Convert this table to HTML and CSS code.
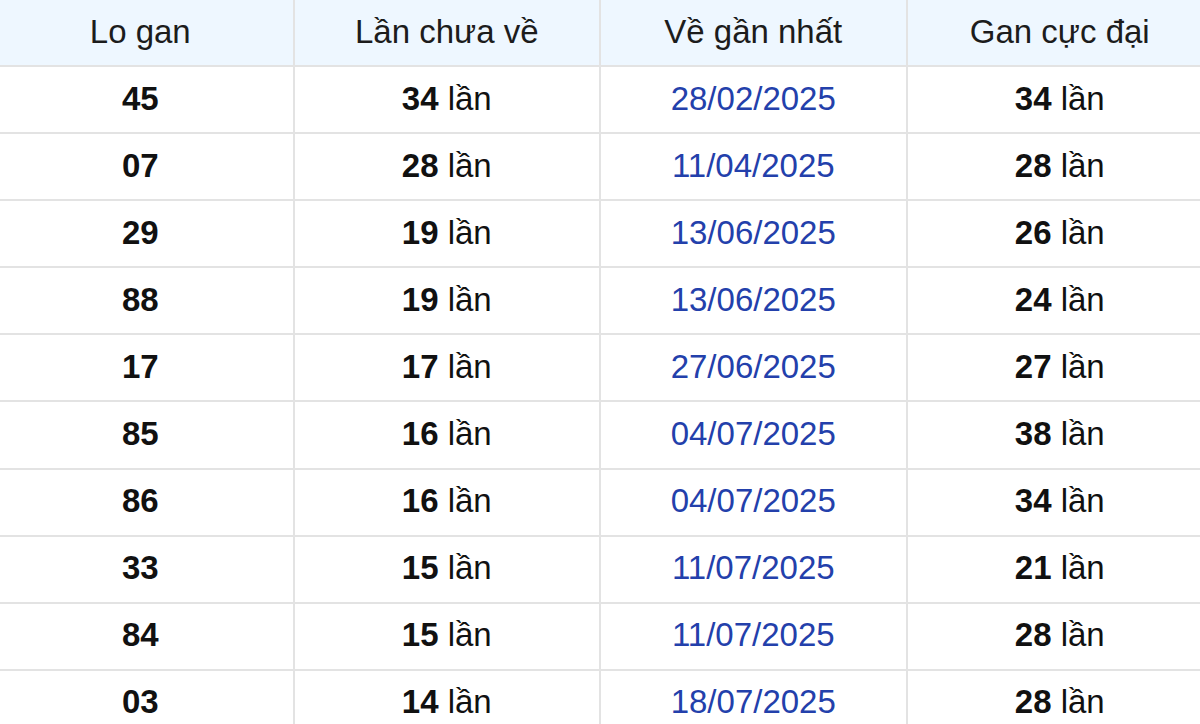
FILE: index.html
```html
<!DOCTYPE html>
<html lang="vi">
<head>
<meta charset="utf-8">
<title>Lo gan</title>
<link rel="stylesheet" href="styles.css">
</head>
<body>
<table class="gan">
  <thead>
    <tr><th>Lo gan</th><th>Lần chưa về</th><th>Về gần nhất</th><th>Gan cực đại</th></tr>
  </thead>
  <tbody>
    <tr><td><b>45</b></td><td><b>34</b> lần</td><td class="date">28/02/2025</td><td><b>34</b> lần</td></tr>
    <tr><td><b>07</b></td><td><b>28</b> lần</td><td class="date">11/04/2025</td><td><b>28</b> lần</td></tr>
    <tr><td><b>29</b></td><td><b>19</b> lần</td><td class="date">13/06/2025</td><td><b>26</b> lần</td></tr>
    <tr><td><b>88</b></td><td><b>19</b> lần</td><td class="date">13/06/2025</td><td><b>24</b> lần</td></tr>
    <tr><td><b>17</b></td><td><b>17</b> lần</td><td class="date">27/06/2025</td><td><b>27</b> lần</td></tr>
    <tr><td><b>85</b></td><td><b>16</b> lần</td><td class="date">04/07/2025</td><td><b>38</b> lần</td></tr>
    <tr><td><b>86</b></td><td><b>16</b> lần</td><td class="date">04/07/2025</td><td><b>34</b> lần</td></tr>
    <tr><td><b>33</b></td><td><b>15</b> lần</td><td class="date">11/07/2025</td><td><b>21</b> lần</td></tr>
    <tr><td><b>84</b></td><td><b>15</b> lần</td><td class="date">11/07/2025</td><td><b>28</b> lần</td></tr>
    <tr><td><b>03</b></td><td><b>14</b> lần</td><td class="date">18/07/2025</td><td><b>28</b> lần</td></tr>
  </tbody>
</table>
</body>
</html>
```
FILE: styles.css
```css
html, body {
  margin: 0;
  padding: 0;
  background: #ffffff;
  overflow: hidden;
}
body {
  font-family: "Liberation Sans", Arial, sans-serif;
  color: #111;
}
.gan {
  border-collapse: collapse;
  table-layout: fixed;
  width: 1228px;
  margin-left: -14px;
  font-size: 33px;
}
.gan th, .gan td {
  text-align: center;
  vertical-align: middle;
  padding: 0;
  border: 2px solid #e3e3e3;
  line-height: 1;
}
.gan thead tr {
  background: #eef7ff;
}
.gan th {
  font-weight: normal;
  color: #1c1c1c;
  height: 62px;
  padding-bottom: 3px;
  border-top: none;
}
.gan td {
  height: 62.1px;
  padding-bottom: 3px;
  color: #111;
}
.gan td b {
  font-weight: bold;
}
.gan td.date {
  color: #2340ab;
}
```
